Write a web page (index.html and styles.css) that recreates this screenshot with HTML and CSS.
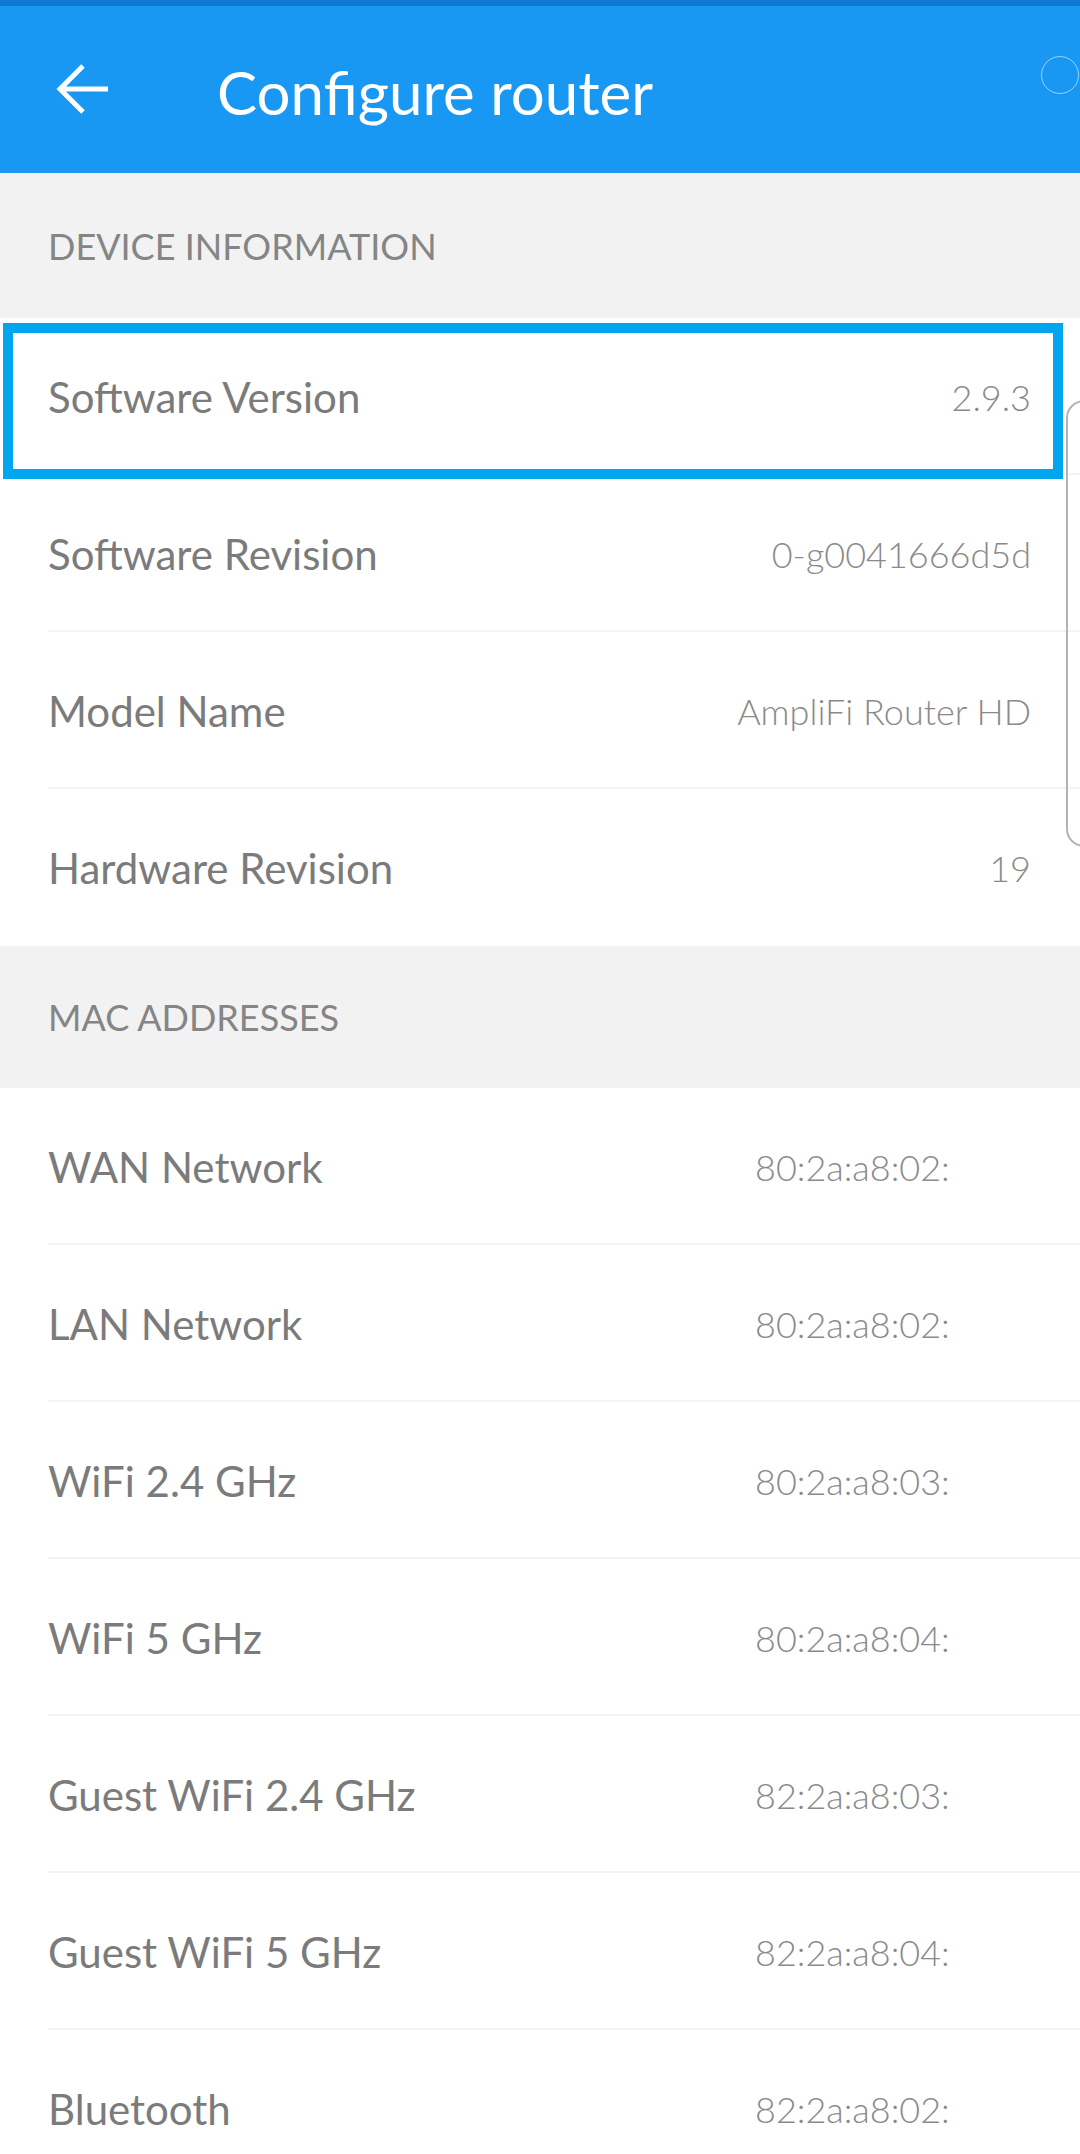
FILE: index.html
```
<!DOCTYPE html>
<html lang="en">
<head>
  <meta charset="UTF-8" />
  <meta name="viewport" content="width=device-width, initial-scale=1.0"/>
  <title>Configure router</title>
  <link rel="stylesheet" href="styles.css">
</head>
<body>
  <div class="status-strip"></div>

  <header class="app-bar">
    <button class="back-btn" aria-label="Back">
      <svg width="60" height="60" viewBox="0 0 60 60">
        <path d="M31 7 L8 30 L31 53 M8 30 H56" fill="none" stroke="#fff" stroke-width="5"/>
      </svg>
    </button>
    <h1 class="title">Configure router</h1>
    <span class="sync-ring"></span>
  </header>

  <section class="group">
    <h2 class="group-title">DEVICE INFORMATION</h2>
    <div class="row row-focused">
      <span class="label">Software Version</span>
      <span class="value">2.9.3</span>
      <div class="focus-box"></div>
    </div>
    <div class="row">
      <span class="label">Software Revision</span>
      <span class="value">0-g0041666d5d</span>
    </div>
    <div class="row">
      <span class="label">Model Name</span>
      <span class="value">AmpliFi Router HD</span>
    </div>
    <div class="row row-last">
      <span class="label">Hardware Revision</span>
      <span class="value">19</span>
    </div>
  </section>

  <section class="group group-mac">
    <h2 class="group-title">MAC ADDRESSES</h2>
    <div class="row">
      <span class="label">WAN Network</span>
      <span class="value mac">80:2a:a8:02:</span>
    </div>
    <div class="row">
      <span class="label">LAN Network</span>
      <span class="value mac">80:2a:a8:02:</span>
    </div>
    <div class="row">
      <span class="label">WiFi 2.4 GHz</span>
      <span class="value mac">80:2a:a8:03:</span>
    </div>
    <div class="row">
      <span class="label">WiFi 5 GHz</span>
      <span class="value mac">80:2a:a8:04:</span>
    </div>
    <div class="row">
      <span class="label">Guest WiFi 2.4 GHz</span>
      <span class="value mac">82:2a:a8:03:</span>
    </div>
    <div class="row">
      <span class="label">Guest WiFi 5 GHz</span>
      <span class="value mac">82:2a:a8:04:</span>
    </div>
    <div class="row">
      <span class="label">Bluetooth</span>
      <span class="value mac">82:2a:a8:02:</span>
    </div>
  </section>

  <div class="edge-handle"></div>
</body>
</html>
```

FILE: styles.css
```
html, body {
  margin: 0;
  padding: 0;
  background: #fff;
  font-family: 'Lato', 'Open Sans', sans-serif;
  overflow: hidden;
}

body {
  position: relative;
  height: 2154px;
}

.status-strip {
  height: 6px;
  background: #1277d4;
}

.app-bar {
  height: 167px;
  background: #1998f3;
  display: flex;
  align-items: center;
  position: relative;
}

.back-btn {
  width: 60px;
  height: 60px;
  margin-left: 52px;
  margin-top: -2px;
  padding: 0;
  border: 0;
  background: none;
  display: flex;
}

.title {
  margin: 4px 0 0 105px;
  font-size: 60px;
  font-weight: 400;
  color: #fff;
  line-height: 1;
}

.sync-ring {
  position: absolute;
  top: 50px;
  left: 1041px;
  width: 36px;
  height: 36px;
  border: 1.5px solid rgba(255, 255, 255, 0.55);
  border-radius: 50%;
}

.group-title {
  margin: 0;
  height: 145px;
  display: flex;
  align-items: center;
  padding-left: 48px;
  background: #f2f2f2;
  font-size: 36px;
  font-weight: 400;
  color: #858585;
}

.group-mac .group-title {
  height: 142px;
}

.row {
  height: 157px;
  display: flex;
  align-items: center;
  justify-content: space-between;
  padding: 0 49px 0 48px;
  position: relative;
  box-sizing: border-box;
}

.row::after {
  content: "";
  position: absolute;
  left: 48px;
  right: 0;
  bottom: 0;
  height: 2px;
  background: #f3f3f3;
}

.row-last::after {
  display: none;
}

.label {
  font-size: 42px;
  color: #7b7b7b;
}

.value {
  font-size: 36px;
  font-weight: 300;
  color: #8a8a8a;
}

.mac {
  width: 196px;
  margin-right: 80px;
  overflow: hidden;
  white-space: nowrap;
}

.focus-box {
  position: absolute;
  top: 5px;
  left: 3px;
  width: 1060px;
  height: 156px;
  border: 10px solid #02a6ee;
  box-sizing: border-box;
  z-index: 2;
}

.edge-handle {
  position: absolute;
  top: 400px;
  left: 1066px;
  width: 40px;
  height: 443px;
  border: 2px solid #b3b3b3;
  border-radius: 18px;
  z-index: 3;
}
```
